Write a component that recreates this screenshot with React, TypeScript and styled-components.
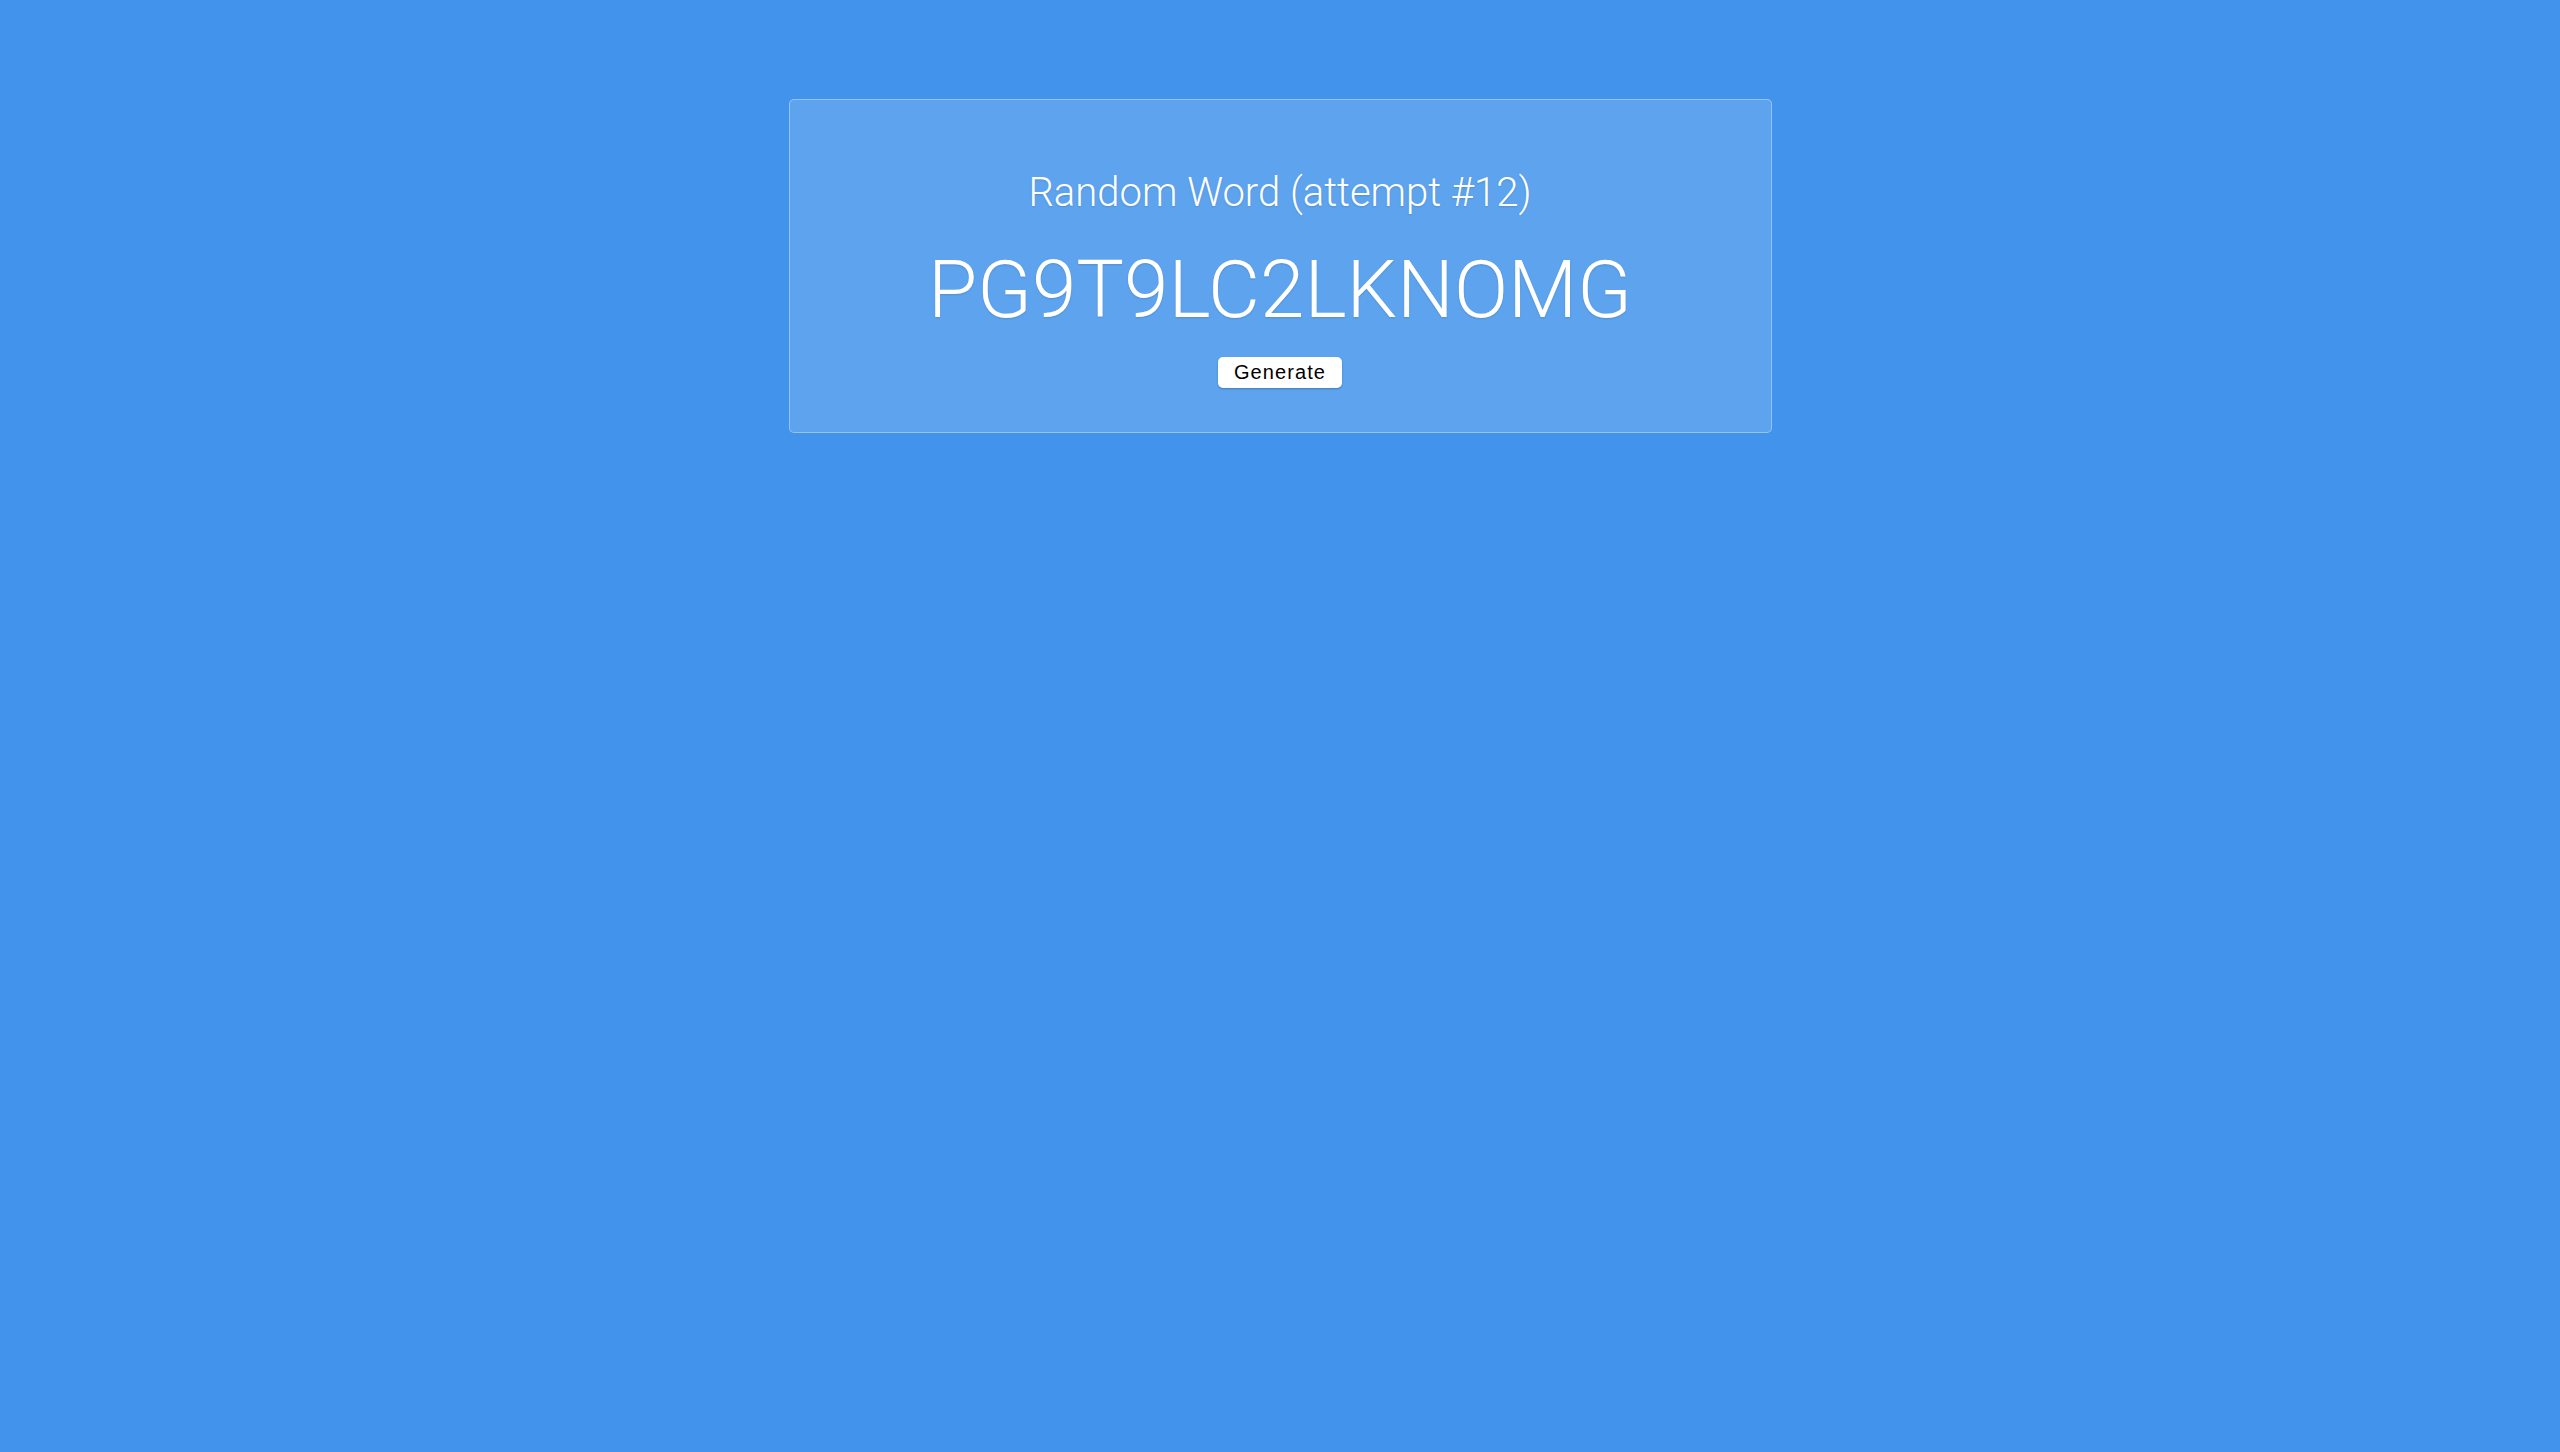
import React from "react";
import styled, { createGlobalStyle } from "styled-components";

const Global = createGlobalStyle`
  html, body {
    margin: 0;
    padding: 0;
    background: #4193eb;
    min-height: 100%;
  }
  body {
    min-height: 1452px;
    font-family: Roboto, "Noto Sans", sans-serif;
  }
`;

const Page = styled.div`
  display: flex;
  justify-content: center;
  padding-top: 99px;
`;

const Card = styled.div`
  width: 981px;
  height: 332px;
  box-sizing: content-box;
  background: rgba(255, 255, 255, 0.15);
  border: 1px solid rgba(255, 255, 255, 0.35);
  border-radius: 5px;
  display: flex;
  flex-direction: column;
  align-items: center;
  color: #fff;
  text-shadow: 0 1px 2px rgba(0, 0, 0, 0.12);
`;

const Title = styled.h2`
  margin: 65px 0 0;
  font-family: Roboto, sans-serif;
  font-weight: 300;
  font-size: 40px;
  line-height: 56px;
`;

const Word = styled.h1`
  margin: 19px 0 0;
  font-family: Roboto, sans-serif;
  font-weight: 300;
  font-size: 80px;
  line-height: 100px;
`;

const Button = styled.button`
  margin-top: 17px;
  width: 124px;
  height: 31px;
  background: #fff;
  color: #000;
  border: none;
  border-radius: 5px;
  box-shadow: 0 1px 2px rgba(0, 0, 0, 0.25);
  font-family: "Liberation Sans", Arial, sans-serif;
  font-size: 20px;
  letter-spacing: 1.1px;
  padding: 0;
  text-shadow: none;
  cursor: pointer;
`;

export default function App() {
  return (
    <>
      <Global />
      <Page>
        <Card>
          <Title>Random Word (attempt #12)</Title>
          <Word>PG9T9LC2LKNOMG</Word>
          <Button>Generate</Button>
        </Card>
      </Page>
    </>
  );
}
